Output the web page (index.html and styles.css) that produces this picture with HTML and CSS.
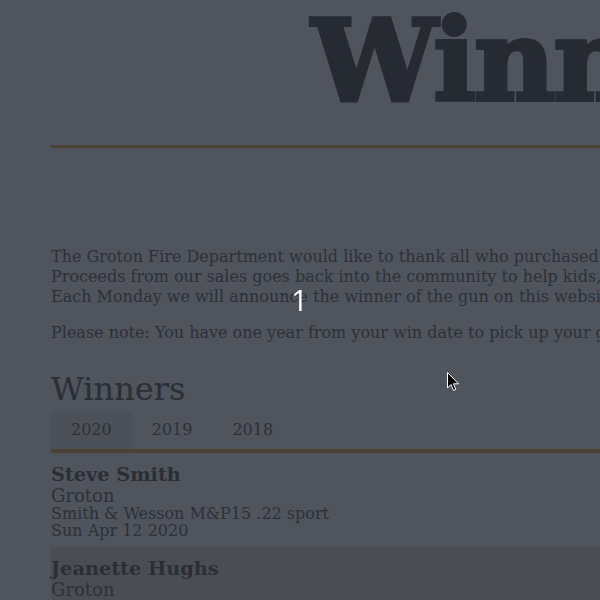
FILE: index.html
```html
<!DOCTYPE html>
<html lang="en">
<head>
<meta charset="utf-8">
<title>Winners</title>
<link rel="stylesheet" href="styles.css">
</head>
<body>
<div class="page">
  <header class="masthead">
    <h1 class="title">Winners</h1>
  </header>
  <hr class="rule">
  <section class="intro">
    <p>The Groton Fire Department would like to thank all who purchased a gun raffle calendar this year.<br>
    Proceeds from our sales goes back into the community to help kids, families and our department.<br>
    Each Monday we will announce the winner of the gun on this website.</p>
    <p>Please note: You have one year from your win date to pick up your gun.</p>
  </section>
  <section class="winners">
    <h2 class="winners-title">Winners</h2>
    <nav class="tabs">
      <span class="tab active">2020</span>
      <span class="tab">2019</span>
      <span class="tab">2018</span>
    </nav>
    <ul class="list">
      <li class="item">
        <div class="name">Steve Smith</div>
        <div class="town">Groton</div>
        <div class="detail">Smith &amp; Wesson M&amp;P15 .22 sport</div>
        <div class="detail">Sun Apr 12 2020</div>
      </li>
      <li class="item alt">
        <div class="name">Jeanette Hughs</div>
        <div class="town">Groton</div>
        <div class="detail">Ruger 10/22 Carbine</div>
        <div class="detail">Mon Apr 6 2020</div>
      </li>
    </ul>
  </section>
</div>
<div class="counter">1</div>
<svg class="cursor" width="13" height="20" viewBox="0 0 13 20" aria-hidden="true">
  <path d="M0.5 0.5 L0.5 16 L4 12.5 L6.5 18.5 L8.8 17.5 L6.4 11.8 L11.5 11.8 Z" fill="#000" stroke="#fff" stroke-width="1"/>
</svg>
</body>
</html>
```

FILE: styles.css
```css
html, body {
  margin: 0;
  padding: 0;
  overflow: hidden;
  background: #50545d;
}

body {
  font-family: "DejaVu Serif", serif;
  color: #2c3038;
  width: 600px;
  height: 600px;
}

.page {
  width: 1030px;
  padding-left: 51px;
}

.masthead {
  text-align: center;
  padding-top: 5px;
}

.title {
  margin: 0;
  font-family: "DejaVu Serif", serif;
  font-weight: 900;
  font-size: 112px;
  line-height: 1;
  color: #262a32;
  -webkit-text-stroke: 4px #262a32;
  letter-spacing: -2px;
  white-space: nowrap;
}

.rule {
  margin: 28px 0 0 0;
  border: 0;
  height: 3px;
  background: #4b4034;
}

.intro {
  padding-top: 99px;
}

.intro p {
  margin: 0 0 16px 0;
  font-size: 16px;
  line-height: 20px;
  white-space: nowrap;
}

.winners-title {
  margin: 26px 0 0 0;
  font-weight: normal;
  font-size: 32px;
  line-height: 40px;
  color: #2a2e36;
}

.tabs {
  display: flex;
  margin-top: 2px;
  border-bottom: 4px solid #4b4034;
}

.tab {
  padding: 0 20px;
  height: 38px;
  line-height: 38px;
  font-size: 16px;
  color: #2c3038;
}

.tab.active {
  background: #4c5058;
}

.list {
  list-style: none;
  margin: 0;
  padding: 0;
}

.item {
  padding: 10px 0 8px 0;
}

.item.alt {
  background: #4a4d54;
}

.name {
  font-weight: bold;
  font-size: 19.3px;
  line-height: 23px;
  color: #2a2e36;
}

.town {
  font-size: 18px;
  line-height: 19px;
}

.detail {
  font-size: 16px;
  line-height: 17px;
}

.counter {
  position: fixed;
  left: 291px;
  top: 283px;
  font-family: "Open Sans", sans-serif;
  font-size: 30px;
  line-height: 34px;
  color: #ffffff;
}

.cursor {
  position: fixed;
  left: 447px;
  top: 372px;
}
```
